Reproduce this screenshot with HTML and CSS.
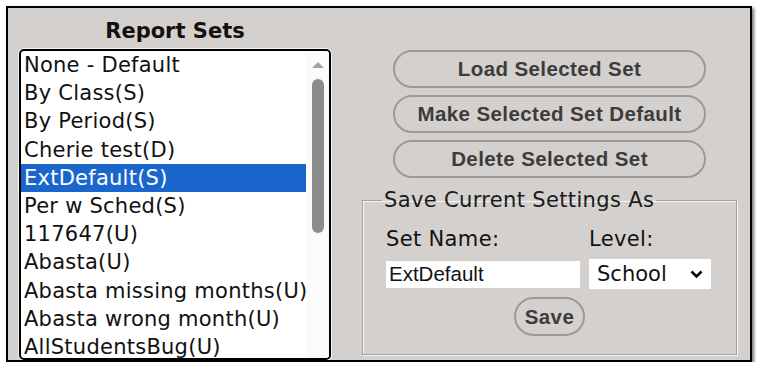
FILE: index.html
```html
<!DOCTYPE html>
<html lang="en">

<head>
  <meta charset="UTF-8">
  <title>Report Sets</title>
  <link rel="stylesheet" href="styles.css">
</head>

<body>
  <div class="panel">
    <div class="sets">
      <h2 class="sets-title">Report Sets</h2>
      <div class="listbox">
        <ul class="set-list">
          <li>None - Default</li>
          <li>By Class(S)</li>
          <li>By Period(S)</li>
          <li>Cherie test(D)</li>
          <li class="selected">ExtDefault(S)</li>
          <li>Per w Sched(S)</li>
          <li>117647(U)</li>
          <li>Abasta(U)</li>
          <li>Abasta missing months(U)</li>
          <li>Abasta wrong month(U)</li>
          <li>AllStudentsBug(U)</li>
        </ul>
        <div class="scrollbar">
          <span class="scroll-up"></span>
          <span class="scroll-thumb"></span>
        </div>
      </div>
    </div>

    <div class="actions">
      <button class="pill">Load Selected Set</button>
      <button class="pill">Make Selected Set Default</button>
      <button class="pill">Delete Selected Set</button>

      <fieldset class="save-box">
        <legend>Save Current Settings As</legend>
        <div class="save-grid">
          <label for="set-name">Set Name:</label>
          <label for="level">Level:</label>
          <input type="text" id="set-name" class="name-input" value="ExtDefault">
          <div class="level-select" id="level">
            <span>School</span>
            <svg width="13" height="9" viewBox="0 0 13 9">
              <path d="M1.5 1.5 L6.5 6.5 L11.5 1.5" fill="none" stroke="#000" stroke-width="2.6" />
            </svg>
          </div>
        </div>
        <button class="pill save-btn">Save</button>
      </fieldset>
    </div>
  </div>
</body>

</html>
```

FILE: styles.css
```css
* {
  box-sizing: border-box;
  margin: 0;
  padding: 0;
}

body {
  background-color: #ffffff;
  font-family: "DejaVu Sans", Verdana, sans-serif;
  color: #111111;
}

.panel {
  display: flex;
  width: 746px;
  height: 356px;
  margin: 6px 0 0 6px;
  border: 2px solid #000000;
  background-color: #d4d0ce;
  box-shadow: 2px 2px 3px rgba(0, 0, 0, 0.55);
  overflow: hidden;
}

/* left column: list of saved sets */
.sets {
  width: 323px;
  padding-left: 11px;
}

.sets-title {
  padding-top: 5px;
  line-height: 36px;
  font-size: 21px;
  font-weight: bold;
  text-align: center;
}

.listbox {
  display: flex;
  width: 312px;
  height: 311px;
  border: 2px solid #000000;
  border-radius: 5px;
  background-color: #ffffff;
  box-shadow: 0 0 0 1px #f4f4f4;
  overflow: hidden;
}

.set-list {
  width: 285px;
  list-style: none;
  overflow: hidden;
}

.set-list li {
  padding-left: 3px;
  line-height: 28.2px;
  font-size: 21px;
  letter-spacing: 0.25px;
  white-space: nowrap;
}

.set-list li.selected {
  background-color: #1a66cc;
  color: #ffffff;
}

.scrollbar {
  display: flex;
  flex-direction: column;
  align-items: center;
  width: 23px;
  background-color: #fbfbfb;
}

.scroll-up {
  margin-top: 11px;
  border-left: 6px solid transparent;
  border-right: 6px solid transparent;
  border-bottom: 6px solid #a3a3a3;
}

.scroll-thumb {
  width: 12px;
  height: 154px;
  margin-top: 11px;
  border-radius: 6px;
  background-color: #8c8c8c;
}

/* right column: actions */
.actions {
  display: flex;
  flex-direction: column;
  align-items: center;
  width: 375px;
  margin-left: 31px;
  padding-top: 42px;
}

.pill {
  width: 313px;
  height: 38px;
  margin-bottom: 7px;
  border: 2px solid #9c9a99;
  border-radius: 20px;
  background: transparent;
  font-family: "Liberation Sans", Arial, sans-serif;
  font-size: 20.5px;
  letter-spacing: 0.4px;
  font-weight: bold;
  color: #3c3c3c;
}

.save-box {
  width: 375px;
  margin-top: 3px;
  padding: 0 22px 18px;
  border: 1px solid #a3a1a0;
  box-shadow: inset 1px 1px 0 #f6f6f6, 1px 1px 0 #f6f6f6;
  display: flex;
  flex-direction: column;
  align-items: center;
}

.save-box legend {
  margin-left: -3px;
  padding: 0 2px;
  line-height: 24px;
  font-size: 21px;
  letter-spacing: 0.35px;
  color: #1a1a1a;
}

.save-grid {
  display: grid;
  grid-template-columns: 194px 122px;
  column-gap: 9px;
  row-gap: 8px;
  align-items: center;
  align-self: flex-start;
  padding-top: 15px;
  margin-left: 1px;
}

.save-grid label {
  line-height: 24px;
  font-size: 21px;
  letter-spacing: 0.35px;
}

.name-input {
  height: 27px;
  padding: 0 3px;
  border: none;
  background-color: #ffffff;
  font-family: "Liberation Sans", Arial, sans-serif;
  font-size: 20.5px;
  color: #111111;
}

.level-select {
  display: flex;
  justify-content: space-between;
  align-items: center;
  height: 30px;
  padding: 0 8px 0 8px;
  background-color: #ffffff;
  font-size: 21px;
}

.save-btn {
  width: 71px;
  height: 39px;
  margin: 8px 0 0;
}
```
